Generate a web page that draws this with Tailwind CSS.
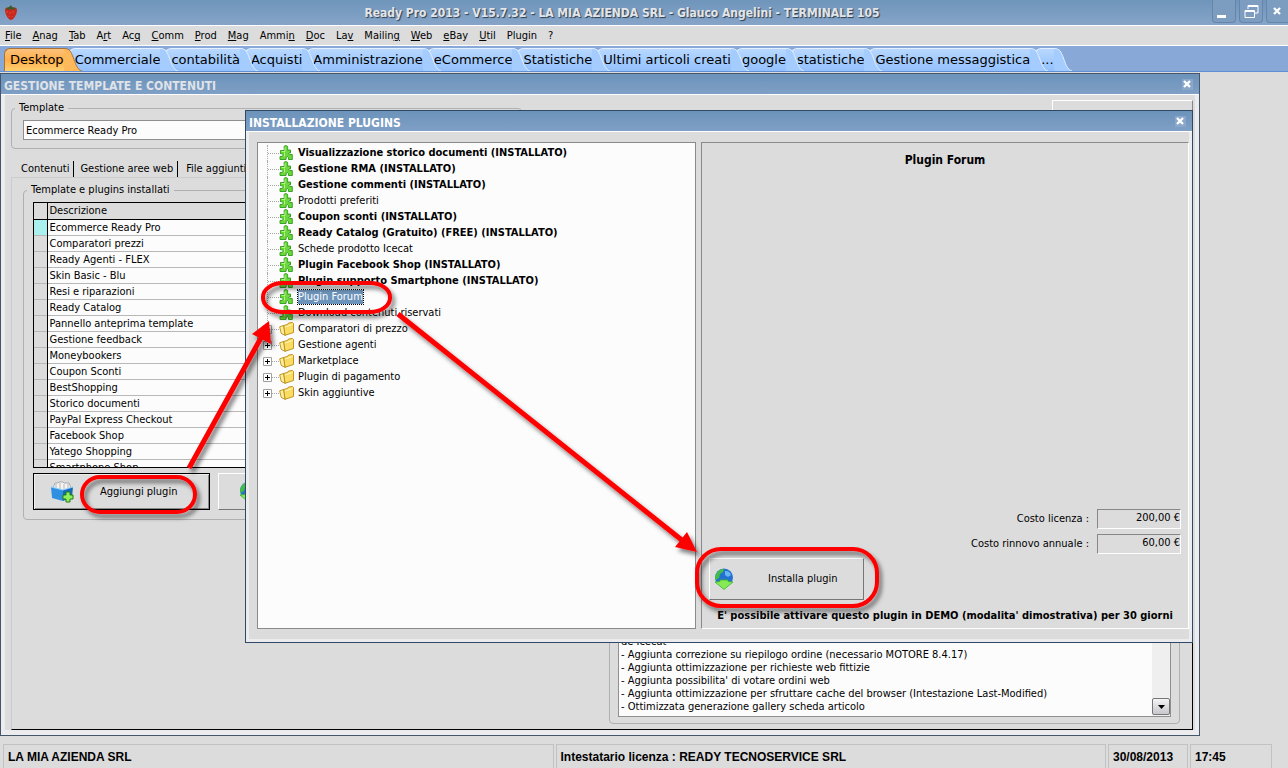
<!DOCTYPE html>
<html lang="it">

<head>
    <meta charset="UTF-8">
    <meta name="viewport" content="width=device-width, initial-scale=1.0">
    <title>Ready Pro 2013</title>
    <script src="https://cdn.jsdelivr.net/npm/@tailwindcss/browser@4"></script>
</head>

<body class="relative flex h-screen flex-col overflow-hidden bg-[#dcdcdc] font-['DejaVu_Sans_Condensed','DejaVu_Sans',sans-serif] text-[11px] leading-4 text-black">
    <svg class="hidden">
        <symbol id="puzzle" viewBox="0 0 14 16">
            <path d="M1.500 5.500H5.200V3.200C4.500 1.500 5.500.6 6.800.6S9.200 1.500 8.600 3.200V5H11.500V8H10.300C9.300 8 9.300 9.800 10.500 9.600L13.300 9.500V14.500H9.500V12.500C9 11.300 7.500 11.500 7.300 12.500L7 14.500H1V11.500H3.200C4.500 11 4.300 9 3.200 8.800H1.500z" fill="#6ad83a" stroke="#2f9a1a" stroke-width=".9" />
            <path d="M2.500 6.500H6V2.500M5.500 7.500v4" fill="none" stroke="#b4f58c" />
        </symbol>
        <symbol id="folder" viewBox="0 0 15 14">
            <path d="M4.500 3.500L8.500 2.500 9.500 1l4-.500 1 1V10.500L6 13.300z" fill="#fbdc62" stroke="#b98a17" stroke-width=".9" />
            <path d="M.7 4.800L4.500 3.500 6 13.300 2.300 11.500z" fill="#fff0a0" stroke="#b98a17" stroke-width=".9" />
            <path d="M6 5l7.500-2.500" stroke="#fff6bc" />
        </symbol>
        <symbol id="globe" viewBox="0 0 20 22">
            <circle cx="10" cy="9.500" r="9" fill="#2372cf" />
            <path d="M2 6C4 2.500 7 .8 10 .7L9 4 6 6 5 10 1.500 12C.8 10 1 8 2 6z" fill="#43bd45" />
            <path d="M11 3c3-.5 5 1 6 4l-3 2-3-2z" fill="#69b4f2" />
            <path d="M1 14l5-.5V12h8v1.500l5 .5-9 7.500z" fill="#86ea55" stroke="#3fae2a" stroke-width=".8" />
        </symbol>
        <symbol id="close" viewBox="0 0 9 9">
            <path d="M1 1l6 6M7 1L1 7" stroke="#fff" stroke-width="2.300" />
        </symbol>
    </svg>

    <!-- title bar -->
    <header class="flex h-[26px] shrink-0 items-center border-b border-white bg-linear-to-b from-[#6f95bb] to-[#86a4c8]">
        <svg class="ml-1 h-[18px] w-[14px] shrink-0" viewBox="0 0 14 16">
            <path d="M1 5C1 2 4 3 7 3s6-1 6 2c0 5-4 10-6 10S1 10 1 5z" fill="#c9281c" />
            <path d="M3 6v2M6 7v2M9 6v2M5 11v1M8 11v1" stroke="#ea5a44" stroke-width=".8" />
            <path d="M2 3l3-1 2-2 1 2 4 1-3 2-2-1-3 1z" fill="#3f5a2a" />
        </svg>
        <h1 class="flex-1 pl-[14px] text-center text-[12px] font-bold text-[#e2e6ea] [text-shadow:1px_1px_1px_#2c3c50]">Ready Pro 2013 - V15.7.32 - LA MIA AZIENDA SRL - Glauco Angelini - TERMINALE 105</h1>
        <div class="-mr-0.5 flex h-full shrink-0 gap-[3px] pb-0.5">
            <button type="button" aria-label="Minimize" class="flex w-6 items-end rounded-b border border-t-0 border-[#6585ab] bg-[#7c9cc0] p-1"><span class="h-[3px] w-[9px] bg-white"></span></button>
            <button type="button" aria-label="Restore" class="flex w-6 items-center justify-center rounded-b border border-t-0 border-[#6585ab] bg-[#7c9cc0]">
                <svg class="h-[15px] w-[15px]" viewBox="0 0 15 15" fill="none" stroke="#fff"><path d="M4 5V1.500h10V9h-3M4 2.500h10M1 6.500h9.500V13.500H1zM1 7.500h10" /></svg>
            </button>
            <button type="button" aria-label="Close" class="flex w-6 items-center rounded-b border border-t-0 border-[#6585ab] bg-[#7c9cc0] pl-1.5"><svg class="h-[9px] w-[9px]"><use href="#close" /></svg></button>
        </div>
    </header>

    <nav class="flex h-5 shrink-0 items-center gap-[11px] border-b border-white pt-px pl-[5px]" id="menu"></nav>

    <div class="flex h-[26px] shrink-0 items-end border-b border-[#5f8fd6] bg-[#88a9d8] pl-1 font-['DejaVu_Sans',sans-serif] text-[13px]" id="tabs"></div>

    <main class="relative min-h-0 flex-1">
        <!-- template window -->
        <section class="absolute top-px right-[88px] bottom-2 left-0 flex flex-col border border-[#45566b]">
            <div class="flex h-[21px] shrink-0 items-center justify-between border-b border-white bg-linear-to-b from-[#6c93ba] to-[#7f9fc6] pr-1.5 pl-[3px]">
                <h2 class="pt-1 text-[12px] font-bold text-[#dfe3e8]">GESTIONE TEMPLATE E CONTENUTI</h2>
                <button type="button" aria-label="Close" class="flex h-[11px] w-[11px] items-center justify-center bg-[#8aa7ca]"><svg class="h-[9px] w-[9px]"><use href="#close" /></svg></button>
            </div>
            <div class="flex min-h-0 flex-1 flex-col border-x-4 border-b-[5px] border-[#ececee] px-1.5 pr-0.5">
                <div class="flex justify-between pt-[5px]">
                    <fieldset class="h-[49px] w-[511px] rounded border border-[#b0b0b0] px-[11px]">
                        <legend class="-ml-2 px-1"><label for="template">Template</label></legend>
                        <input id="template" type="text" value="Ecommerce Ready Pro" class="mt-1 block h-5 w-full border border-[#8f8f8f] bg-[#fcfcfc] px-0.5">
                    </fieldset>
                    <div class="h-8 w-[141px] border-t border-r border-l border-t-white border-r-[#888] border-l-white"></div>
                </div>
                <div class="mt-3 flex h-4 shrink-0 items-center" role="tablist">
                    <button type="button" role="tab" class="border-r border-black px-1 pl-2.5">Contenuti</button>
                    <button type="button" role="tab" class="border-r border-black px-1.5 pr-1">Gestione aree web</button>
                    <button type="button" role="tab" class="px-2">File aggiuntivi</button>
                </div>
                <div class="flex min-h-0 flex-1 justify-between border border-t-[#ccccd0] border-r-black border-b-black border-l-[#ccccd0] pt-1 pr-3 pb-[5px] pl-[11px]">
                    <fieldset class="h-[338px] w-[420px] rounded border border-[#b0b0b0] pl-[9px]">
                        <legend class="-ml-1.5 px-1">Template e plugins installati</legend>
                        <div class="mt-1 h-[266px] overflow-hidden border border-black">
                            <table class="w-full border-collapse text-left">
                                <thead>
                                    <tr class="h-4 border-b border-black">
                                        <th class="w-[13px] border-r border-black p-0"></th>
                                        <th class="p-0 pl-0.5 leading-[15px] font-normal">Descrizione</th>
                                    </tr>
                                </thead>
                                <tbody id="installed"></tbody>
                            </table>
                        </div>
                        <div class="mt-[5px] flex gap-2">
                            <button type="button" class="flex h-[37px] w-[177px] items-center border border-black pl-4 shadow-[inset_1px_1px_#eee,inset_-1px_-1px_#8a8a8a]">
                                <svg class="h-[22px] w-6" viewBox="0 0 24 22">
                                    <path d="M3 7l2-5h3l1-1h4l1 1h5l2 5-3 4H5z" fill="#f3f3f3" stroke="#9a9a9a" stroke-width=".8" />
                                    <path d="M6 3v5M10 2v6M14 3v5M18 3v5" stroke="#b8b8b8" />
                                    <path d="M1 6l12 3v11L2 17z" fill="#2f8fe0" />
                                    <path d="M13 9l10-3-1 10-9 4z" fill="#1668b8" />
                                    <path d="M1 6l12 3 10-3" fill="none" stroke="#8fd0ff" />
                                    <path d="M16 11h4v3h3v4h-3v3h-4v-3h-3v-4h3z" fill="#8df05a" stroke="#227a16" />
                                </svg>
                                <span class="ml-[26px]">Aggiungi plugin</span>
                            </button>
                            <button type="button" class="flex h-[37px] w-[177px] items-center border border-t-white border-r-[#777] border-b-[#777] border-l-white pl-5">
                                <svg class="h-[22px] w-5"><use href="#globe" /></svg>
                                <span class="ml-8">Aggiorna plugin</span>
                            </button>
                        </div>
                    </fieldset>
                    <fieldset class="flex w-[571px] flex-col rounded border border-[#b0b0b0] px-2 pb-1.5">
                        <legend>Note</legend>
                        <div class="flex min-h-0 flex-1 border border-[#8f8f8f] bg-[#fcfcfc]">
                            <div class="flex flex-1 flex-col justify-end pb-[3px] pl-0.5 leading-[13px]" id="notes"></div>
                            <div class="flex w-[18px] flex-col justify-end bg-[#efefef] pb-px">
                                <button type="button" aria-label="Scroll down" class="flex h-[17px] items-center justify-center rounded-xs border border-[#777] bg-linear-to-b from-[#f4f4f6] to-[#c8c8cc]">
                                    <svg class="h-1 w-[7px]" viewBox="0 0 7 4"><path d="M0 0h7L3.500 4z" /></svg>
                                </button>
                            </div>
                        </div>
                    </fieldset>
                </div>
            </div>
        </section>

        <!-- plugin installation window -->
        <section class="absolute top-[38px] right-[95px] bottom-[101px] left-[245px] flex flex-col border border-[#2e4866] bg-[#dcdcdc]">
            <div class="flex h-[21px] shrink-0 items-center justify-between border-b border-white bg-linear-to-b from-[#6c93ba] to-[#7f9fc6] pr-1.5 pl-[3px]">
                <h2 class="pt-1 text-[12px] font-bold text-white">INSTALLAZIONE PLUGINS</h2>
                <button type="button" aria-label="Close" class="flex h-[11px] w-[11px] items-center justify-center bg-[#8aa7ca]"><svg class="h-[9px] w-[9px]"><use href="#close" /></svg></button>
            </div>
            <div class="flex min-h-0 flex-1 gap-[5px] border-x-3 border-b-3 border-[#ececee] px-2 pt-[10px] pr-0 pb-[10px]">
                <div class="w-[439px] shrink-0 border border-[#8a8a8a] bg-[#fcfcfc]">
                    <ul class="pt-0.5 pl-1" id="tree"></ul>
                </div>
                <div class="flex flex-1 flex-col border border-t-[#8a8a8a] border-r-white border-b-white border-l-[#8a8a8a]">
                    <h3 class="pt-[9px] text-center text-[12px] font-bold">Plugin Forum</h3>
                    <div class="mt-auto flex flex-col items-end gap-[5px] pr-[7px]">
                        <div class="flex items-center gap-2">
                            <label for="licenza">Costo licenza :</label>
                            <input id="licenza" type="text" readonly value="200,00 €" class="h-5 w-[84px] border border-t-[#888] border-r-white border-b-white border-l-[#888] pb-1 text-right">
                        </div>
                        <div class="flex items-center gap-2">
                            <label for="rinnovo">Costo rinnovo annuale :</label>
                            <input id="rinnovo" type="text" readonly value="60,00 €" class="h-5 w-[84px] border border-t-[#888] border-r-white border-b-white border-l-[#888] pb-1 text-right">
                        </div>
                    </div>
                    <button type="button" class="mt-1 ml-[7px] flex h-[42px] w-[155px] items-center border border-t-white border-r-[#777] border-b-[#777] border-l-white pl-1">
                        <svg class="h-[22px] w-5"><use href="#globe" /></svg>
                        <span class="ml-[34px]">Installa plugin</span>
                    </button>
                    <p class="pt-2 pb-1 text-center font-bold">E' possibile attivare questo plugin in DEMO (modalita' dimostrativa) per 30 giorni</p>
                </div>
            </div>
        </section>
    </main>

    <footer class="flex h-6 shrink-0 gap-0.5 pr-4 pl-[3px] font-['Liberation_Sans',sans-serif] text-[12px] font-bold">
        <div class="flex flex-1 items-center border border-b-0 border-[#c2c2c2] pl-1">LA MIA AZIENDA SRL</div>
        <div class="flex flex-1 items-center border border-b-0 border-[#c2c2c2] pl-1">Intestatario licenza : READY TECNOSERVICE SRL</div>
        <div class="flex w-20 items-center border border-b-0 border-[#c2c2c2] pl-1">30/08/2013</div>
        <div class="flex w-[82px] items-center border border-b-0 border-[#c2c2c2] pl-1">17:45</div>
    </footer>

    <!-- callouts drawn over the windows -->
    <svg class="pointer-events-none absolute inset-0 h-full w-full" fill="none" stroke="#f00" stroke-width="4">
        <filter id="shadow" filterUnits="userSpaceOnUse" x="0" y="0" width="1288" height="768">
            <feDropShadow dx="3" dy="4" stdDeviation="2" flood-opacity=".5" />
        </filter>
        <g filter="url(#shadow)">
            <rect x="82" y="477" width="113" height="35" rx="18" />
            <rect x="263" y="283" width="127" height="29" rx="20" ry="14" />
            <rect x="697" y="549" width="180" height="57" rx="24" />
            <path d="M189 468L262 336M398 314L683 541" stroke-width="5" />
            <path d="M269 321L252 334 271 344zM697 552L675 547 687 532z" fill="#f00" stroke="none" />
        </g>
    </svg>

    <script>
        const menu = ['<u>F</u>ile', '<u>A</u>nag', '<u>T</u>ab', 'A<u>r</u>t', 'Ac<u>q</u>', '<u>C</u>omm', '<u>P</u>rod', '<u>M</u>ag', 'Ammi<u>n</u>', '<u>D</u>oc', 'La<u>v</u>', 'Mailin<u>g</u>', '<u>W</u>eb', '<u>e</u>Bay', '<u>U</u>til', 'Plugin', '?'];
        const tabs = ['Desktop', 'Commerciale', 'contabilità', 'Acquisti', 'Amministrazione', 'eCommerce', 'Statistiche', 'Ultimi articoli creati', 'google', 'statistiche', 'Gestione messaggistica', '...'];
        const installed = ['Ecommerce Ready Pro', 'Comparatori prezzi', 'Ready Agenti - FLEX', 'Skin Basic - Blu', 'Resi e riparazioni', 'Ready Catalog', 'Pannello anteprima template', 'Gestione feedback', 'Moneybookers', 'Coupon Sconti', 'BestShopping', 'Storico documenti', 'PayPal Express Checkout', 'Facebook Shop', 'Yatego Shopping', 'Smartphone Shop'];
        const notes = ['de Icecat', '- Aggiunta correzione su riepilogo ordine (necessario MOTORE 8.4.17)', '- Aggiunta ottimizzazione per richieste web fittizie', "- Aggiunta possibilita' di votare ordini web", '- Aggiunta ottimizzazione per sfruttare cache del browser (Intestazione Last-Modified)', '- Ottimizzata generazione gallery scheda articolo'];
        const plugins = ['Visualizzazione storico documenti (INSTALLATO)', 'Gestione RMA (INSTALLATO)', 'Gestione commenti (INSTALLATO)', 'Prodotti preferiti', 'Coupon sconti (INSTALLATO)', 'Ready Catalog (Gratuito) (FREE) (INSTALLATO)', 'Schede prodotto Icecat', 'Plugin Facebook Shop (INSTALLATO)', 'Plugin supporto Smartphone (INSTALLATO)', 'Plugin Forum', 'Download contenuti riservati'];
        const folders = ['Comparatori di prezzo', 'Gestione agenti', 'Marketplace', 'Plugin di pagamento', 'Skin aggiuntive'];

        function createTab(name, i) {
            const active = i === 0;
            const body = active
                ? 'border-[#a9743a] bg-linear-to-b from-[#fcc27c] via-[#ffae48] to-[#ffd070]'
                : 'border-[#e4f0ff] bg-linear-to-b from-[#b8d8ff] via-[#a4ccff] to-[#94c0fc]';
            return `
            <button type="button" class="flex h-[23px]">
                <span class="flex h-full items-center rounded-tl-md border-t border-l pl-[5px] ${body}">${name}</span>
                <svg class="relative z-10 -mr-[13px] h-[23px] w-[18px]" viewBox="0 0 18 23">
                    <path d="M0 .5C6 .5 7 4 9 9s4 13 9 14H0z" fill="${active ? '#ffb85a' : '#a4ccff'}" />
                    <path d="M0 .5C6 .5 7 4 9 9s4 13 9 14" fill="none" stroke="${active ? '#a9743a' : '#e4f0ff'}" />
                </svg>
            </button>`
        }

        function createPlugin(name) {
            const selected = name === 'Plugin Forum';
            const style = name.includes('INSTALLATO')
                ? 'font-bold'
                : selected ? 'bg-[#6c93ba] text-white outline outline-dotted outline-black' : '';
            return `
            <li class="flex h-4 items-center">
                <span class="ml-[5px] flex h-full w-3 items-center border-l border-dotted border-[#a8a8a8]"><span class="w-full border-t border-dotted border-[#a8a8a8]"></span></span>
                <svg class="h-4 w-[14px]"><use href="#puzzle" /></svg>
                <span class="ml-[5px] leading-[14px] ${style}">${name}</span>
            </li>`
        }

        function createFolder(name) {
            return `
            <li class="flex h-4 items-center">
                <span class="ml-px flex w-4 items-center">
                    <svg class="h-[9px] w-[9px] shrink-0" viewBox="0 0 9 9"><path d="M.5.5h8v8h-8z" fill="#fff" stroke="#a0a0a0" /><path d="M2 4.500h5M4.500 2v5" stroke="#000" /></svg>
                    <span class="w-full border-t border-dotted border-[#a8a8a8]"></span>
                </span>
                <svg class="h-[14px] w-[15px]"><use href="#folder" /></svg>
                <span class="ml-1">${name}</span>
            </li>`
        }

        function createRow(name, i) {
            return `
            <tr class="h-4 border-b border-[#b8b8b8]">
                <td class="border-r border-r-black p-0 ${i === 0 ? 'bg-[#a9f0ee]' : ''}"></td>
                <td class="bg-[#fcfcfc] p-0 pl-0.5 leading-[15px]">${name}</td>
            </tr>`
        }

        document.getElementById('menu').innerHTML = menu.map(m => `<a href="#">${m}</a>`).join('');
        document.getElementById('tabs').innerHTML = tabs.map(createTab).join('');
        document.getElementById('installed').innerHTML = installed.map(createRow).join('');
        document.getElementById('notes').innerHTML = notes.map(n => `<p>${n}</p>`).join('');
        document.getElementById('tree').innerHTML = plugins.map(createPlugin).join('') + folders.map(createFolder).join('');
    </script>
</body>

</html>
